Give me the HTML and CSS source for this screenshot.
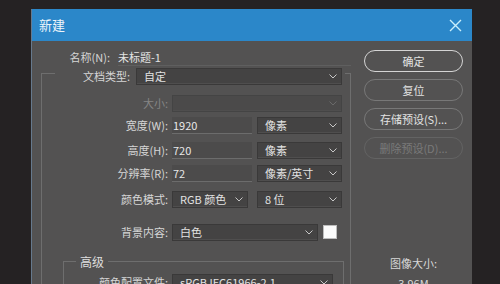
FILE: index.html
```html
<!DOCTYPE html>
<html lang="zh">
<head>
<meta charset="utf-8">
<link rel="stylesheet" href="styles.css">
</head>
<body>
<div class="dialog">
  <div class="titlebar">
    <span class="title">新建</span>
    <svg class="close" width="13" height="13" viewBox="0 0 13 13"><path d="M1 1 L12 12 M12 1 L1 12" stroke="#c9eefb" stroke-width="1.4" fill="none"/></svg>
  </div>
  <div class="content">
    <div class="form">
      <div class="row name-row">
        <span class="label lw-name">名称(N):</span>
        <span class="name-field">未标题-1</span>
      </div>
      <div class="group">
        <div class="row legend-row">
          <span class="label lw-legend">文档类型:</span>
          <div class="select w-doc"><span>自定</span><svg class="chev" width="8" height="5" viewBox="0 0 8 5"><path d="M0.5 0.5 L4 4 L7.5 0.5" stroke="#c8c8c8" fill="none"/></svg></div>
        </div>
        <div class="row r-size">
          <span class="label lw dim">大小:</span>
          <div class="select disabled w-full"><span></span><svg class="chev" width="8" height="5" viewBox="0 0 8 5"><path d="M0.5 0.5 L4 4 L7.5 0.5" stroke="#6a6a6a" fill="none"/></svg></div>
        </div>
        <div class="row r-w">
          <span class="label lw">宽度(W):</span>
          <div class="input w-half">1920</div>
          <div class="select w-unit"><span>像素</span><svg class="chev" width="8" height="5" viewBox="0 0 8 5"><path d="M0.5 0.5 L4 4 L7.5 0.5" stroke="#c8c8c8" fill="none"/></svg></div>
        </div>
        <div class="row r-h">
          <span class="label lw">高度(H):</span>
          <div class="input w-half">720</div>
          <div class="select w-unit"><span>像素</span><svg class="chev" width="8" height="5" viewBox="0 0 8 5"><path d="M0.5 0.5 L4 4 L7.5 0.5" stroke="#c8c8c8" fill="none"/></svg></div>
        </div>
        <div class="row r-r">
          <span class="label lw">分辨率(R):</span>
          <div class="input w-half">72</div>
          <div class="select w-unit"><span>像素/英寸</span><svg class="chev" width="8" height="5" viewBox="0 0 8 5"><path d="M0.5 0.5 L4 4 L7.5 0.5" stroke="#c8c8c8" fill="none"/></svg></div>
        </div>
        <div class="row r-m">
          <span class="label lw">颜色模式:</span>
          <div class="select w-mode"><span>RGB 颜色</span><svg class="chev" width="8" height="5" viewBox="0 0 8 5"><path d="M0.5 0.5 L4 4 L7.5 0.5" stroke="#c8c8c8" fill="none"/></svg></div>
          <div class="select w-unit"><span>8 位</span><svg class="chev" width="8" height="5" viewBox="0 0 8 5"><path d="M0.5 0.5 L4 4 L7.5 0.5" stroke="#c8c8c8" fill="none"/></svg></div>
        </div>
        <div class="row r-bg">
          <span class="label lw">背景内容:</span>
          <div class="select w-bg"><span>白色</span><svg class="chev" width="8" height="5" viewBox="0 0 8 5"><path d="M0.5 0.5 L4 4 L7.5 0.5" stroke="#c8c8c8" fill="none"/></svg></div>
          <span class="swatch"></span>
        </div>
        <div class="subgroup">
          <div class="sublegend">高级</div>
          <div class="row r-prof">
            <span class="label lw-sub">颜色配置文件:</span>
            <div class="select w-prof"><span>sRGB IEC61966-2.1</span><svg class="chev" width="8" height="5" viewBox="0 0 8 5"><path d="M0.5 0.5 L4 4 L7.5 0.5" stroke="#c8c8c8" fill="none"/></svg></div>
          </div>
        </div>
      </div>
    </div>
    <div class="side">
      <div class="btn primary">确定</div>
      <div class="btn">复位</div>
      <div class="btn">存储预设(S)...</div>
      <div class="btn disabled">删除预设(D)...</div>
      <div class="imgsize">图像大小:</div>
      <div class="imgsize-val">3.96M</div>
    </div>
  </div>
</div>
</body>
</html>
```
FILE: styles.css
```css
html, body {
  margin: 0;
}
body {
  background: #252223;
  font-family: "Noto Sans CJK SC", "Noto Sans", sans-serif;
  font-size: 11px;
  color: #dcdcdc;
  padding: 9px 0 0 31px;
  height: 284px;
  box-sizing: border-box;
  overflow: hidden;
}
.dialog {
  width: 441px;
  height: 290px;
  background: #535252;
  border-left: 1px solid #66798d;
  box-sizing: border-box;
  overflow: hidden;
}
.titlebar {
  height: 32px;
  background: #2b87c9;
  display: flex;
  align-items: center;
  justify-content: space-between;
  padding: 0 10px 0 7px;
}
.title {
  font-size: 13px;
  color: #eef5fa;
  line-height: 16px;
}
.content {
  display: flex;
}
.form {
  width: 319px;
  padding-left: 9px;
  box-sizing: border-box;
  flex: none;
}
.row {
  display: flex;
  align-items: center;
  height: 18px;
}
.label {
  flex: none;
  text-align: right;
  line-height: 18px;
  color: #d6d6d6;
  white-space: nowrap;
}
.label.dim {
  color: #858585;
}
.lw-name { width: 69px; }
.lw-legend { width: 75px; }
.lw { width: 126px; }
.lw-sub { width: 104px; }
.name-row {
  margin-top: 7px;
}
.name-field {
  margin-left: 8px;
  width: 233px;
  height: 16px;
  line-height: 16px;
  color: #e4e4e4;
  border-bottom: 1px solid #5f5f5f;
}
.group {
  margin-top: 7px;
  width: 310px;
  height: 240px;
  border: 1px solid #6e6e6e;
  box-sizing: border-box;
}
.legend-row {
  margin-top: -7px;
  margin-left: 13px;
  width: 290px;
  background: #535252;
}
.select {
  height: 17px;
  box-sizing: border-box;
  background: #444343;
  border: 1px solid #3a3939;
  box-shadow: inset 0 -1px 0 #4f4e4e;
  display: flex;
  align-items: center;
  justify-content: space-between;
  padding: 0 4px 0 7px;
  color: #e2e2e2;
  line-height: 15px;
  white-space: nowrap;
  flex: none;
}
.select.disabled {
  background: #4b4a4a;
  border-color: #444;
}
.input {
  height: 17px;
  box-sizing: border-box;
  background: #4c4b4b;
  border-bottom: 1px solid #6c6c6c;
  padding-left: 1px;
  line-height: 16px;
  color: #e8e8e8;
  flex: none;
}
.legend-row .select { margin-left: 6px; }
.r-size .select,
.r-w .input, .r-h .input, .r-r .input,
.r-m .w-mode, .r-bg .select,
.r-prof .select { margin-left: 4px; }
.w-doc { width: 206px; }
.w-full { width: 170px; }
.w-half { width: 80px; }
.w-unit { width: 85px; margin-left: 5px; }
.w-mode { width: 76px; }
.r-m .w-unit { margin-left: 9px; width: 85px; }
.w-bg { width: 146px; }
.w-prof { width: 161px; }
.r-size { margin-top: 9px; }
.r-w { margin-top: 4px; }
.r-h { margin-top: 7px; }
.r-r { margin-top: 5px; }
.r-m { margin-top: 8px; }
.r-bg { margin-top: 15px; }
.swatch {
  width: 12px;
  height: 12px;
  background: #fbfbfb;
  border: 1px solid #bdbdbd;
  margin-left: 5px;
  flex: none;
}
.subgroup {
  margin: 20px 6px 0 21px;
  height: 60px;
  border: 1px solid #6e6e6e;
}
.sublegend {
  width: fit-content;
  margin-top: -7px;
  margin-left: 12px;
  padding: 0 4px;
  height: 14px;
  line-height: 14px;
  background: #535252;
  color: #dedede;
  font-size: 12px;
}
.r-prof { margin-top: 4px; }
.side {
  margin-left: 13px;
  width: 99px;
  padding-top: 9px;
  display: flex;
  flex-direction: column;
  gap: 7px;
  flex: none;
}
.btn {
  height: 22px;
  border: 1px solid #787878;
  border-radius: 11px;
  box-sizing: border-box;
  display: flex;
  align-items: center;
  justify-content: center;
  color: #e2e2e2;
  line-height: 16px;
}
.btn.primary {
  border-color: #d4d4d4;
}
.btn.disabled {
  color: #7a7a7a;
  border-color: #636363;
}
.imgsize {
  margin-top: 89px;
  text-align: center;
  line-height: 16px;
  color: #d8d8d8;
}
.imgsize-val {
  margin-top: -3px;
  text-align: center;
  line-height: 16px;
  color: #d8d8d8;
}
```
